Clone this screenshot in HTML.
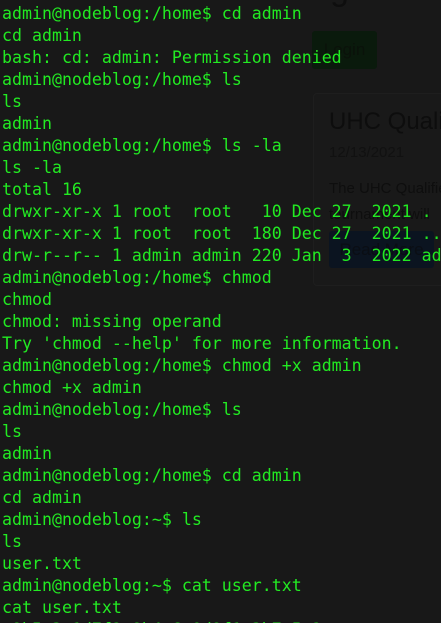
<!DOCTYPE html>
<html><head><style>
body{margin:0;width:441px;height:623px;overflow:hidden;background:#181818;position:relative;font-family:"Liberation Sans",sans-serif}
.wrap{position:absolute;left:0;top:0;width:441px;height:623px;overflow:hidden}
.bg{position:absolute}
pre{position:absolute;left:2px;top:3px;margin:0;font-family:"DejaVu Sans Mono",monospace;font-size:16.6px;line-height:22px;color:#22ea22;white-space:pre}
</style></head><body><div class="wrap">
<div class="bg" style="left:330px;top:-30px;font-size:34px;color:#0e0e0e">g</div>
<div class="bg" style="left:312px;top:31px;width:65px;height:38px;background:#0a1a0c;border-radius:3px;color:#0a120a;font-size:17px;line-height:38px;text-align:center">Login</div>
<div class="bg" style="left:313px;top:93px;width:140px;height:191px;border:1px solid #1e1e1e;border-radius:4px;background:#191919"></div>
<div class="bg" style="left:329px;top:108px;font-size:24px;color:#0d0d0d;white-space:nowrap">UHC Qualifiers</div>
<div class="bg" style="left:329px;top:144px;font-size:15px;color:#111;white-space:nowrap">12/13/2021</div>
<div class="bg" style="left:329px;top:176px;font-size:15px;line-height:26px;color:#0e0e0e;white-space:nowrap">The UHC Qualifiers<br>tournament will</div>
<div class="bg" style="left:329px;top:231px;width:105px;height:37px;background:#0b1420;border-radius:3px;color:#0a0e14;font-size:17px;line-height:37px;text-align:center">Read More</div>
<pre>admin@nodeblog:/home$ cd admin
cd admin
bash: cd: admin: Permission denied
admin@nodeblog:/home$ ls
ls
admin
admin@nodeblog:/home$ ls -la
ls -la
total 16
drwxr-xr-x 1 root  root   10 Dec 27  2021 .
drwxr-xr-x 1 root  root  180 Dec 27  2021 ..
drw-r--r-- 1 admin admin 220 Jan  3  2022 admin
admin@nodeblog:/home$ chmod
chmod
chmod: missing operand
Try 'chmod --help' for more information.
admin@nodeblog:/home$ chmod +x admin
chmod +x admin
admin@nodeblog:/home$ ls
ls
admin
admin@nodeblog:/home$ cd admin
cd admin
admin@nodeblog:~$ ls
ls
user.txt
admin@nodeblog:~$ cat user.txt
cat user.txt
a9b5c3e1d7f2e8b4c6a0d9f1e3b7c5a2</pre>
</div></body></html>
